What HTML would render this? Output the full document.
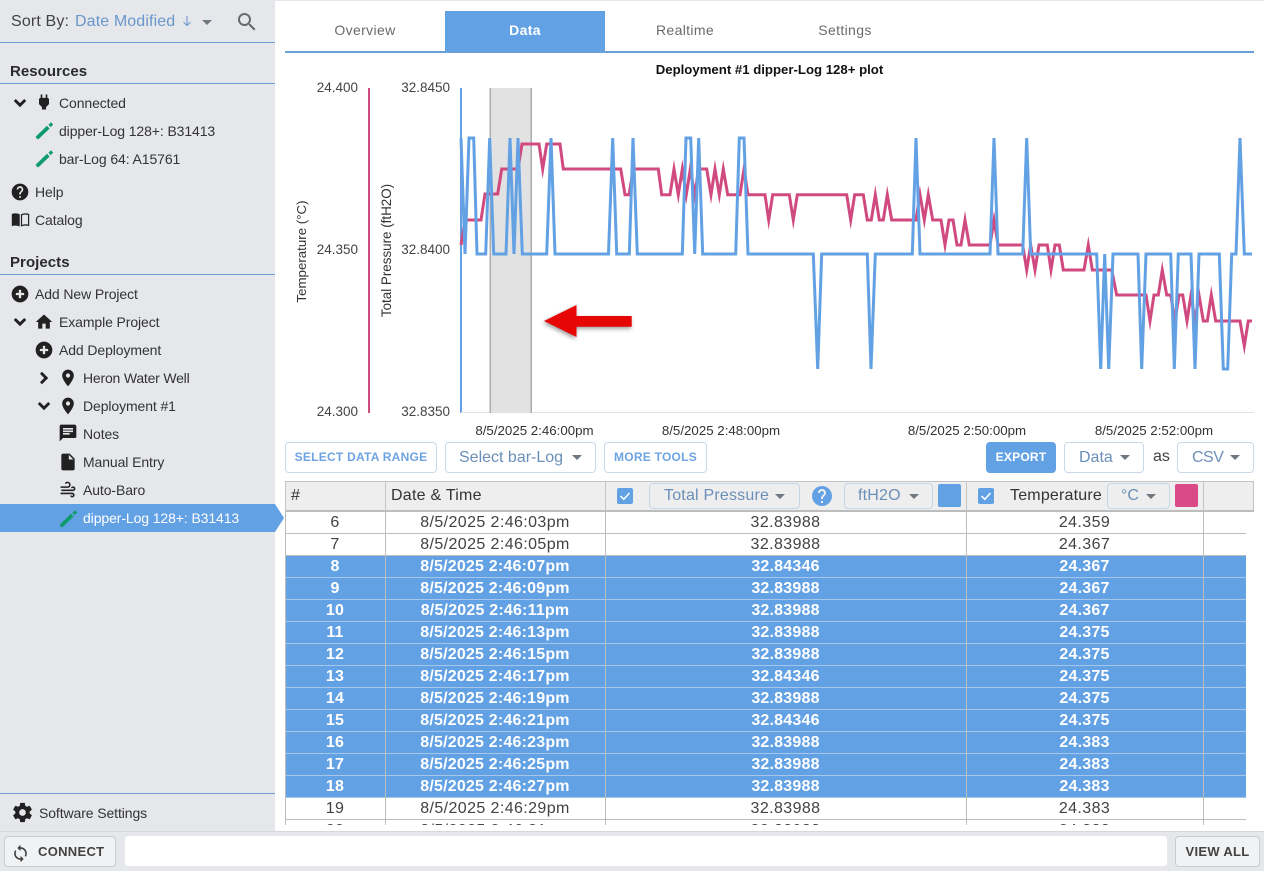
<!DOCTYPE html>
<html><head><meta charset="utf-8"><style>
*{box-sizing:border-box}
html,body{margin:0;padding:0;width:1264px;height:871px;overflow:hidden;background:#fff;font-family:"Liberation Sans",Arial,sans-serif;color:#333}
.a{position:absolute;white-space:nowrap}
#side{position:absolute;left:0;top:0;width:275px;height:831px;background:#e5e7eb}
.hl{position:absolute;left:0;width:275px;height:1px;background:#6f9bd3}
.n{position:absolute;font-size:14px;line-height:20px;height:20px;white-space:nowrap;color:#333;letter-spacing:-.1px}
.h{position:absolute;left:10px;font-size:15px;line-height:20px;font-weight:bold;color:#2b2b2b;letter-spacing:.05px}
.i{position:absolute;fill:#212121}
.tab{position:absolute;top:11px;width:160px;height:40px;line-height:39px;text-align:center;font-size:14px;color:#6b6b6b;letter-spacing:.35px}
.btn{position:absolute;top:442px;height:31px;border:1px solid #c9d8e8;border-radius:4px;background:#fff;text-align:center;line-height:28px;font-size:12px;font-weight:bold;color:#6ea4e2;letter-spacing:.25px;white-space:nowrap}
.sel{position:absolute;top:442px;height:31px;border:1px solid #c9d8e8;border-radius:4px;background:#fff;line-height:29px;font-size:16px;color:#6a8fb8;white-space:nowrap}
.hb{position:absolute;top:483px;height:26px;border:1px solid #c6d6e8;border-radius:4px;background:#eeeeee;line-height:23px;font-size:16px;color:#6a8fb8;white-space:nowrap}
.c{position:absolute;width:0;height:0;border-left:5px solid transparent;border-right:5px solid transparent;border-top:5px solid #6f7780}
#tb{position:absolute;left:285px;top:512px;width:980px;height:313px;overflow:hidden}
.r{position:absolute;left:0;width:961px;height:22px;font-size:16px;line-height:21px;color:#424242;border-bottom:1px solid #bdbdbd;letter-spacing:.4px}
.r.s{background:#63a1e5;color:#fff;font-weight:bold;border-bottom:1px solid #a8c6ea;letter-spacing:.2px}
.r span{position:absolute;top:0;text-align:center;white-space:nowrap}
.r .x{left:0;width:100px}.r .y{left:100px;width:220px}.r .z{left:320px;width:361px}.r .w{left:681px;width:237px}
.v{position:absolute;top:0;width:1px;height:313px;background:#bdbdbd}
.bb{position:absolute;top:836px;height:31px;background:#f1f2f4;border:1px solid #c9cbcf;border-radius:4px;font-size:13px;font-weight:bold;color:#424242;line-height:30px;letter-spacing:.3px}
</style></head><body>
<svg width="0" height="0" style="position:absolute"><defs>
<symbol id="chd" viewBox="0 0 24 24"><path d="M7.41,7.58L12,12.17L16.59,7.58L18.8,9.8L12,16.6L5.2,9.8Z"/></symbol>
<symbol id="chr" viewBox="0 0 24 24"><path d="M7.6,16.59L12.17,12L7.6,7.41L9.8,5.2L16.6,12L9.8,18.8Z"/></symbol>
<symbol id="plug" viewBox="0 0 24 24"><path d="M16,7V3H14V7H10V3H8V7H8C7,7 6,8 6,9V14.5L9.5,18V21H14.5V18L18,14.5V9C18,8 17,7 16,7Z"/></symbol>
<symbol id="help" viewBox="0 0 24 24"><path d="M15.07,11.25L14.17,12.17C13.45,12.89 13,13.5 13,15H11V14.5C11,13.39 11.45,12.39 12.17,11.67L13.41,10.41C13.78,10.05 14,9.55 14,9C14,7.89 13.1,7 12,7A2,2 0 0,0 10,9H8A4,4 0 0,1 12,5A4,4 0 0,1 16,9C16,9.88 15.64,10.67 15.07,11.25M13,19H11V17H13M12,2A10,10 0 0,0 2,12A10,10 0 0,0 12,22A10,10 0 0,0 22,12C22,6.47 17.5,2 12,2Z"/></symbol>
<symbol id="plus" viewBox="0 0 24 24"><path d="M17,13.4H13.4V17H10.6V13.4H7V10.6H10.6V7H13.4V10.6H17M12,2A10,10 0 0,0 2,12A10,10 0 0,0 12,22A10,10 0 0,0 22,12A10,10 0 0,0 12,2Z"/></symbol>
<symbol id="home" viewBox="0 0 24 24"><path d="M10,20V14H14V20H19V12H22L12,3L2,12H5V20H10Z"/></symbol>
<symbol id="pin" viewBox="0 0 24 24"><path d="M12,11.5A2.5,2.5 0 0,1 9.5,9A2.5,2.5 0 0,1 12,6.5A2.5,2.5 0 0,1 14.5,9A2.5,2.5 0 0,1 12,11.5M12,2A7,7 0 0,0 5,9C5,14.25 12,22 12,22C12,22 19,14.25 19,9A7,7 0 0,0 12,2Z"/></symbol>
<symbol id="note" viewBox="0 0 24 24"><path d="M20,2H4A2,2 0 0,0 2,4V22L6,18H20A2,2 0 0,0 22,16V4C22,2.89 21.1,2 20,2M6,9H18V11H6M14,14H6V12H14M18,8H6V6H18"/></symbol>
<symbol id="file" viewBox="0 0 24 24"><path d="M13,9V3.5L18.5,9M6,2C4.89,2 4,2.89 4,4V20A2,2 0 0,0 6,22H18A2,2 0 0,0 20,20V8L14,2H6Z"/></symbol>
<symbol id="wind" viewBox="0 0 24 24"><path d="M4,10A1,1 0 0,1 3,9A1,1 0 0,1 4,8H12A2,2 0 0,0 14,6A2,2 0 0,0 12,4C11.45,4 10.95,4.22 10.59,4.59C10.2,5 9.56,5 9.17,4.59C8.78,4.2 8.78,3.56 9.17,3.17C9.9,2.45 10.9,2 12,2A4,4 0 0,1 16,6A4,4 0 0,1 12,10H4M19,12A1,1 0 0,0 20,11A1,1 0 0,0 19,10C18.72,10 18.47,10.11 18.29,10.29C17.9,10.68 17.27,10.68 16.88,10.29C16.5,9.9 16.5,9.27 16.88,8.88C17.42,8.34 18.17,8 19,8A3,3 0 0,1 22,11A3,3 0 0,1 19,14H5A1,1 0 0,1 4,13A1,1 0 0,1 5,12H19M18,18H4A1,1 0 0,1 3,17A1,1 0 0,1 4,16H18A3,3 0 0,1 21,19A3,3 0 0,1 18,22C17.17,22 16.42,21.66 15.88,21.12C15.5,20.73 15.5,20.1 15.88,19.71C16.27,19.32 16.9,19.32 17.29,19.71C17.47,19.89 17.72,20 18,20A1,1 0 0,0 19,19A1,1 0 0,0 18,18Z"/></symbol>
<symbol id="cog" viewBox="0 0 24 24"><path d="M12,15.5A3.5,3.5 0 0,1 8.5,12A3.5,3.5 0 0,1 12,8.5A3.5,3.5 0 0,1 15.5,12A3.5,3.5 0 0,1 12,15.5M19.43,12.97C19.47,12.65 19.5,12.33 19.5,12C19.5,11.67 19.47,11.34 19.43,11L21.54,9.37C21.73,9.22 21.78,8.95 21.66,8.73L19.66,5.27C19.54,5.05 19.27,4.96 19.05,5.05L16.56,6.05C16.04,5.66 15.5,5.32 14.87,5.07L14.5,2.42C14.46,2.18 14.25,2 14,2H10C9.75,2 9.54,2.18 9.5,2.42L9.13,5.07C8.5,5.32 7.96,5.66 7.44,6.05L4.95,5.05C4.73,4.96 4.46,5.05 4.34,5.27L2.34,8.73C2.21,8.95 2.27,9.22 2.46,9.37L4.57,11C4.53,11.34 4.5,11.67 4.5,12C4.5,12.33 4.53,12.65 4.57,12.97L2.46,14.63C2.27,14.78 2.21,15.05 2.34,15.27L4.34,18.73C4.46,18.95 4.73,19.03 4.95,18.95L7.44,17.94C7.96,18.34 8.5,18.68 9.13,18.93L9.5,21.58C9.54,21.82 9.75,22 10,22H14C14.25,22 14.46,21.82 14.5,21.58L14.87,18.93C15.5,18.67 16.04,18.34 16.56,17.94L19.05,18.95C19.27,19.03 19.54,18.95 19.66,18.73L21.66,15.27C21.78,15.05 21.73,14.78 21.54,14.63L19.43,12.97Z"/></symbol>
<symbol id="mag" viewBox="0 0 24 24"><path d="M9.5,3A6.5,6.5 0 0,1 16,9.5C16,11.11 15.41,12.59 14.44,13.73L14.71,14H15.5L20.5,19L19,20.5L14,15.5V14.71L13.73,14.44C12.59,15.41 11.11,16 9.5,16A6.5,6.5 0 0,1 3,9.5A6.5,6.5 0 0,1 9.5,3M9.5,5C7,5 5,7 5,9.5C5,12 7,14 9.5,14C12,14 14,12 14,9.5C14,7 12,5 9.5,5Z"/></symbol>
<symbol id="sync" viewBox="0 0 24 24"><path d="M12,18A6,6 0 0,1 6,12C6,11 6.25,10.03 6.7,9.2L5.24,7.74C4.46,8.97 4,10.43 4,12A8,8 0 0,0 12,20V23L16,19L12,15M12,4V1L8,5L12,9V6A6,6 0 0,1 18,12C18,13 17.75,13.97 17.3,14.8L18.76,16.26C19.54,15.03 20,13.57 20,12A8,8 0 0,0 12,4Z"/></symbol>
<symbol id="book" viewBox="0 0 24 24"><path d="M1,5C3.5,4 8,4 11,5.5V21C8,19.5 3.5,19.5 1,20.5ZM12.5,5.5C15.5,4 20.5,4 23,5V20.5C20.5,19.5 15.5,19.5 12.5,21ZM14,6.6V18.8C16.5,17.9 19.5,17.8 21.5,18.4V6.2C19.5,5.7 16.2,5.7 14,6.6Z"/></symbol>
<symbol id="pen" viewBox="0 0 20 20"><path d="M2,18L14,6.5" fill="none" stroke="#0f9a6d" stroke-width="4"/><path d="M15.3,5.2L18,2.6" fill="none" stroke="#0f9a6d" stroke-width="3.400"/><path d="M1,19L3.2,14.6L5.4,17Z" fill="#0f9a6d"/></symbol>
</defs></svg>

<div class="a" style="left:0;top:0;width:1264px;height:1px;background:#e5e7eb"></div>

<div id="side">
<div class="a" style="left:11px;top:12px;font-size:16px;line-height:20px;color:#424242;letter-spacing:.15px">Sort By:</div>
<div class="a" style="left:75px;top:12px;font-size:16px;line-height:20px;color:#6a97cb;letter-spacing:.12px">Date Modified</div>
<svg class="a" style="left:182px;top:15px" width="10" height="13" viewBox="0 0 10 13"><path d="M5,1V10M1.5,7L5,10.5L8.500,7" fill="none" stroke="#6a97cb" stroke-width="1.100"/></svg>
<div class="c" style="left:202px;top:20px"></div>
<svg class="i" style="left:235px;top:10px;fill:#666a6e" width="24" height="24"><use href="#mag"/></svg>
<div class="hl" style="top:42px"></div>

<div class="h" style="top:62px">Resources</div>
<div class="hl" style="top:83px"></div>
<svg class="i" style="left:9px;top:92px" width="22" height="22"><use href="#chd"/></svg>
<svg class="i" style="left:34px;top:92px" width="20" height="20"><use href="#plug"/></svg>
<div class="n" style="left:59px;top:93px">Connected</div>
<svg class="i" style="left:34.500px;top:120.500px" width="19" height="19"><use href="#pen"/></svg>
<div class="n" style="left:59px;top:121px">dipper-Log 128+: B31413</div>
<svg class="i" style="left:34.500px;top:148.500px" width="19" height="19"><use href="#pen"/></svg>
<div class="n" style="left:59px;top:149px">bar-Log 64: A15761</div>
<svg class="i" style="left:9.500px;top:182px" width="20" height="20"><use href="#help"/></svg>
<div class="n" style="left:35px;top:182px">Help</div>
<svg class="i" style="left:10.500px;top:210px" width="19" height="19"><use href="#book"/></svg>
<div class="n" style="left:35px;top:210px">Catalog</div>

<div class="h" style="top:253px">Projects</div>
<div class="hl" style="top:274px"></div>
<svg class="i" style="left:9.500px;top:284px" width="20" height="20"><use href="#plus"/></svg>
<div class="n" style="left:35px;top:284px">Add New Project</div>
<svg class="i" style="left:9px;top:311px" width="22" height="22"><use href="#chd"/></svg>
<svg class="i" style="left:34px;top:312px" width="20" height="20"><use href="#home"/></svg>
<div class="n" style="left:59px;top:312px">Example Project</div>
<svg class="i" style="left:33.500px;top:340px" width="20" height="20"><use href="#plus"/></svg>
<div class="n" style="left:59px;top:340px">Add Deployment</div>
<svg class="i" style="left:33px;top:367px" width="22" height="22"><use href="#chr"/></svg>
<svg class="i" style="left:58px;top:368px" width="20" height="20"><use href="#pin"/></svg>
<div class="n" style="left:83px;top:368px;letter-spacing:-.2px">Heron Water Well</div>
<svg class="i" style="left:33px;top:395px" width="22" height="22"><use href="#chd"/></svg>
<svg class="i" style="left:58px;top:396px" width="20" height="20"><use href="#pin"/></svg>
<div class="n" style="left:83px;top:396px">Deployment #1</div>
<svg class="i" style="left:57.500px;top:423px" width="20" height="20"><use href="#note"/></svg>
<div class="n" style="left:83px;top:424px">Notes</div>
<svg class="i" style="left:58px;top:451.500px" width="20" height="20"><use href="#file"/></svg>
<div class="n" style="left:83px;top:452px">Manual Entry</div>
<svg class="i" style="left:58px;top:480px" width="19" height="19"><use href="#wind"/></svg>
<div class="n" style="left:83px;top:480px">Auto-Baro</div>
<div class="hl" style="top:793px"></div>
<svg class="i" style="left:10.500px;top:801px" width="23" height="23"><use href="#cog"/></svg>
<div class="n" style="left:39px;top:803px">Software Settings</div>
</div>
<svg class="a" style="left:0;top:504px" width="285" height="28"><path d="M0,0H275L284,14L275,28H0Z" fill="#63a1e5"/></svg>
<svg class="i" style="left:59px;top:508.500px" width="19" height="19"><use href="#pen"/></svg>
<div class="n" style="left:83px;top:508px;color:#fff">dipper-Log 128+: B31413</div>

<div class="tab" style="left:285px">Overview</div>
<div class="tab" style="left:445px;background:#63a1e5;color:#fff;font-weight:bold">Data</div>
<div class="tab" style="left:605px">Realtime</div>
<div class="tab" style="left:765px">Settings</div>
<div class="a" style="left:285px;top:51px;width:969px;height:2px;background:#6aa0d8"></div>

<svg class="a" style="left:285px;top:60px" width="979" height="380" viewBox="285 60 979 380">
<text x="769.500" y="74" text-anchor="middle" font-family="Liberation Sans" font-size="13.200" font-weight="bold" fill="#111">Deployment #1 dipper-Log 128+ plot</text>
<g font-family="Liberation Sans" font-size="13.500" fill="#444" text-anchor="end">
<text x="358" y="92">24.400</text><text x="358" y="254">24.350</text><text x="358" y="416">24.300</text>
<text x="450" y="92">32.8450</text><text x="450" y="254">32.8400</text><text x="450" y="416">32.8350</text>
</g>
<text transform="translate(306,251.500) rotate(-90)" text-anchor="middle" font-family="Liberation Sans" font-size="13.300" fill="#333">Temperature (°C)</text>
<text transform="translate(391,250.500) rotate(-90)" text-anchor="middle" font-family="Liberation Sans" font-size="13.400" fill="#333">Total Pressure (ftH2O)</text>
<g font-family="Liberation Sans" font-size="13.300" fill="#333" text-anchor="middle">
<text x="534.500" y="435">8/5/2025 2:46:00pm</text><text x="721" y="435">8/5/2025 2:48:00pm</text><text x="967" y="435">8/5/2025 2:50:00pm</text><text x="1154" y="435">8/5/2025 2:52:00pm</text>
</g>
<rect x="369" y="88" width="2" height="325" fill="#cf4d80" transform="translate(-1,0)"/>
<rect x="460" y="88" width="2" height="325" fill="#63a1e5"/>
<rect x="461" y="412" width="793" height="1" fill="#e4e4e4"/>
<rect x="490" y="88" width="41" height="325" fill="#e2e2e2"/>
<rect x="489.500" y="88" width="1.500" height="325" fill="#adadad"/><rect x="530.500" y="88" width="1.500" height="325" fill="#adadad"/>
<polyline fill="none" stroke="#d04a80" stroke-width="3" stroke-miterlimit="10" points="461,245 465,220 481,220 485,194 497.700,194 501.700,169 518,169 522,144 539,144 542.700,169 546.700,144 560,144 563.300,169 620.700,169 625,194.700 629,194.700 633.300,169 658.300,169 661.700,194.700 670,194.700 674,169 678.300,194.700 682.300,169 686.300,194.700 690.300,169 694.700,194.700 698.700,169 706.700,169 711,194.700 715,169 719.300,194.700 723.300,169 727.700,194.700 740,194.700 744,169 748,194.700 765,194.700 768.700,220 772.700,194.700 789.300,194.700 793.300,220 797.300,194.700 846.700,194.700 850.700,220 854.700,194.700 863.300,194.700 867.300,220 871.300,220 875.300,194.700 879.300,220 883.300,220 887.300,194.700 891.700,220 916,220 920,194.700 924.300,220 928.300,194.700 932.700,220 941,220 945,245 949,220 953,220 957,245 961,245 965,220 969.300,245 990,245 994,220 998,245 1022.700,245 1026.700,270 1030.700,245 1035,270 1039,245 1047.300,245 1051,270 1055,245 1059.300,245 1063.300,270 1084,270 1088.300,245 1092.300,270 1111.700,270 1116.700,295 1146,295 1150,321 1154,295 1158.300,295 1162.300,270 1166.700,295 1170.700,295 1175,321 1179,295 1182.700,295 1187,321 1191,295 1195,321 1199,295 1203.300,321 1207.300,321 1211.300,295 1215.700,321 1240,321 1244.300,346 1248.300,321 1252,321"/>
<polyline fill="none" stroke="#63a1e5" stroke-width="3" stroke-miterlimit="10" points="461,138 465,254 469,138 473.700,138 477,254 485.700,254 489.700,138 493.700,254 506,254 510,138 514,254 518,138 522.300,254 546.700,254 551,138 555,254 608.500,254 612.700,138 616.700,254 629.300,254 633,138 637.300,254 682.300,254 686,138 690.700,138 694.700,254 698.700,138 702.700,254 735.700,254 739.300,138 744,138 748,254 813.300,254 817.700,369 821.700,254 867.300,254 871,369 875.300,254 912.300,254 916,138 920,254 990,254 994,138 998,254 1022.700,254 1026.700,138 1030.700,254 1096.700,254 1100.700,369 1104.700,254 1108.700,369 1113,254 1138,254 1141.700,369 1146,254 1170.700,254 1174.300,369 1178.300,254 1191,254 1195,369 1199,254 1219.300,254 1223.300,369 1227.700,369 1231.700,254 1236,254 1240,138 1244.300,254 1252,254"/>
<path d="M544,321L576.500,305V316H631.700V326.700H576.500V337Z" fill="#e60606" style="filter:drop-shadow(-1px 2px 2px rgba(0,0,0,.4))"/>
</svg>

<div class="btn" style="left:285px;width:152px">SELECT DATA RANGE</div>
<div class="sel" style="left:445px;width:151px;padding-left:13px">Select bar-Log</div><div class="c" style="left:572px;top:455px"></div>
<div class="btn" style="left:604px;width:103px">MORE TOOLS</div>
<div class="btn" style="left:986px;width:70px;background:#63a1e5;border-color:#63a1e5;color:#fff">EXPORT</div>
<div class="sel" style="left:1064px;width:80px;padding-left:14px">Data</div><div class="c" style="left:1120px;top:455px"></div>
<div class="a" style="left:1153px;top:447px;font-size:16px;line-height:20px;color:#424242">as</div>
<div class="sel" style="left:1177px;width:77px;padding-left:14px;letter-spacing:-.5px">CSV</div><div class="c" style="left:1230px;top:455px"></div>

<div class="a" style="left:285px;top:481px;width:969px;height:31px;background:#eeeeee;border:1px solid #c4c4c4;border-bottom:2px solid #bdbdbd"></div>
<div class="a" style="left:385px;top:481px;width:1px;height:30px;background:#c4c4c4"></div>
<div class="a" style="left:605px;top:481px;width:1px;height:30px;background:#c4c4c4"></div>
<div class="a" style="left:966px;top:481px;width:1px;height:30px;background:#c4c4c4"></div>
<div class="a" style="left:1203px;top:481px;width:1px;height:30px;background:#c4c4c4"></div>
<div class="a" style="left:291px;top:486px;font-size:16px;line-height:20px;color:#333">#</div>
<div class="a" style="left:391px;top:486px;font-size:16px;line-height:20px;color:#333;letter-spacing:.25px">Date &amp; Time</div>
<svg class="a" style="left:617px;top:488px" width="16" height="16"><rect width="16" height="16" rx="2" fill="#63a1e5"/><path d="M3.500,8L6.800,11.300L12.500,5" fill="none" stroke="#fff" stroke-width="1.500"/></svg>
<div class="hb" style="left:649px;width:151px;padding-left:14px;letter-spacing:.2px">Total Pressure</div><div class="c" style="left:775px;top:494px"></div>
<svg class="a" style="left:810px;top:484px;fill:#63a1e5" width="24" height="24"><use href="#help"/></svg>
<div class="hb" style="left:844px;width:89px;padding-left:13px;letter-spacing:.2px">ftH2O</div><div class="c" style="left:909px;top:494px"></div>
<div class="a" style="left:938px;top:484px;width:23px;height:23px;border-radius:2px;background:#63a1e5"></div>
<svg class="a" style="left:978px;top:488px" width="16" height="16"><rect width="16" height="16" rx="2" fill="#63a1e5"/><path d="M3.500,8L6.800,11.300L12.500,5" fill="none" stroke="#fff" stroke-width="1.500"/></svg>
<div class="a" style="left:1010px;top:486px;font-size:16px;line-height:20px;color:#333;letter-spacing:.2px">Temperature</div>
<div class="hb" style="left:1107px;width:63px;padding-left:13px">°C</div><div class="c" style="left:1146px;top:494px"></div>
<div class="a" style="left:1175px;top:484px;width:23px;height:23px;border-radius:2px;background:#d94a87"></div>

<div id="tb">
<div class="r" style="top:0"><span class="x">6</span><span class="y">8/5/2025 2:46:03pm</span><span class="z">32.83988</span><span class="w">24.359</span></div>
<div class="r" style="top:22px"><span class="x">7</span><span class="y">8/5/2025 2:46:05pm</span><span class="z">32.83988</span><span class="w">24.367</span></div>
<div class="r s" style="top:44px"><span class="x">8</span><span class="y">8/5/2025 2:46:07pm</span><span class="z">32.84346</span><span class="w">24.367</span></div>
<div class="r s" style="top:66px"><span class="x">9</span><span class="y">8/5/2025 2:46:09pm</span><span class="z">32.83988</span><span class="w">24.367</span></div>
<div class="r s" style="top:88px"><span class="x">10</span><span class="y">8/5/2025 2:46:11pm</span><span class="z">32.83988</span><span class="w">24.367</span></div>
<div class="r s" style="top:110px"><span class="x">11</span><span class="y">8/5/2025 2:46:13pm</span><span class="z">32.83988</span><span class="w">24.375</span></div>
<div class="r s" style="top:132px"><span class="x">12</span><span class="y">8/5/2025 2:46:15pm</span><span class="z">32.83988</span><span class="w">24.375</span></div>
<div class="r s" style="top:154px"><span class="x">13</span><span class="y">8/5/2025 2:46:17pm</span><span class="z">32.84346</span><span class="w">24.375</span></div>
<div class="r s" style="top:176px"><span class="x">14</span><span class="y">8/5/2025 2:46:19pm</span><span class="z">32.83988</span><span class="w">24.375</span></div>
<div class="r s" style="top:198px"><span class="x">15</span><span class="y">8/5/2025 2:46:21pm</span><span class="z">32.84346</span><span class="w">24.375</span></div>
<div class="r s" style="top:220px"><span class="x">16</span><span class="y">8/5/2025 2:46:23pm</span><span class="z">32.83988</span><span class="w">24.383</span></div>
<div class="r s" style="top:242px"><span class="x">17</span><span class="y">8/5/2025 2:46:25pm</span><span class="z">32.83988</span><span class="w">24.383</span></div>
<div class="r s" style="top:264px"><span class="x">18</span><span class="y">8/5/2025 2:46:27pm</span><span class="z">32.83988</span><span class="w">24.383</span></div>
<div class="r" style="top:286px"><span class="x">19</span><span class="y">8/5/2025 2:46:29pm</span><span class="z">32.83988</span><span class="w">24.383</span></div>
<div class="r" style="top:308px"><span class="x">20</span><span class="y">8/5/2025 2:46:31pm</span><span class="z">32.83988</span><span class="w">24.383</span></div>
<div class="v" style="left:0"></div><div class="v" style="left:100px"></div><div class="v" style="left:320px"></div><div class="v" style="left:681px"></div><div class="v" style="left:918px"></div>
</div>

<div class="a" style="left:0;top:831px;width:1264px;height:40px;background:#e5e7eb;border-top:1px solid #d6d8dc"></div>
<div class="bb" style="left:4px;width:112px;padding-left:33px">CONNECT</div>
<svg class="i" style="left:10.500px;top:843.500px;fill:#424242" width="19" height="19"><use href="#sync"/></svg>
<div class="a" style="left:125px;top:836px;width:1042px;height:30px;background:#fff;border-radius:3px"></div>
<div class="bb" style="left:1175px;width:85px;text-align:center">VIEW ALL</div>
</body></html>
